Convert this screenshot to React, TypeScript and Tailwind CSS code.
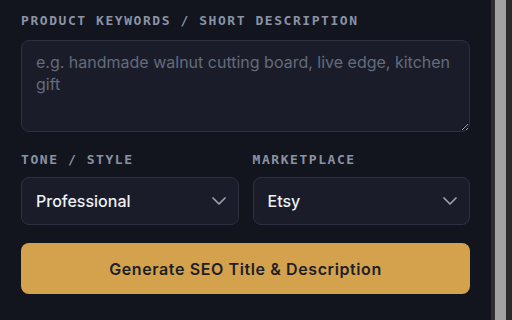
import { ChevronDown } from "lucide-react";

const labelCls =
  "block text-[13px] leading-4 font-semibold tracking-[1.55px] uppercase text-[#8a92a6] [font-family:'DejaVu_Sans_Mono',monospace]";

const Select = ({ value }: { value: string }) => {
  return (
    <div className="flex h-12 items-center justify-between rounded-lg border border-[#2c3142] bg-[#1a1d29] pl-[14px] pr-[7px]">
      <span className="text-base font-medium text-[#eef0f5]">{value}</span>
      <ChevronDown size={24} strokeWidth={1.75} className="text-[#9aa0b0]" />
    </div>
  );
};

export default function App() {
  return (
    <div className="flex h-[320px] w-[512px] overflow-hidden bg-[#12151d] [font-family:Inter,sans-serif]">
      <div className="flex w-[491px] flex-col px-[21px] pt-[13px]">
        <label className={labelCls}>Product Keywords / Short Description</label>
        <textarea
          className="mt-[11px] h-[92px] w-full shrink-0 resize-y rounded-lg border border-[#2c3142] bg-[#1a1d29] px-[14px] py-[10px] text-base leading-[22px] text-[#eef0f5] outline-none placeholder:text-[#656b7b]"
          placeholder="e.g. handmade walnut cutting board, live edge, kitchen gift"
        />
        <div className="mt-[20px] grid grid-cols-2 gap-[14px]">
          <div className="flex flex-col">
            <label className={labelCls}>Tone / Style</label>
            <div className="mt-[9px]">
              <Select value="Professional" />
            </div>
          </div>
          <div className="flex flex-col">
            <label className={labelCls}>Marketplace</label>
            <div className="mt-[9px]">
              <Select value="Etsy" />
            </div>
          </div>
        </div>
        <button className="mt-[18px] h-[51px] w-full shrink-0 rounded-lg bg-[#d4a24c] text-base font-semibold tracking-[0.6px] text-[#1d1f26]">
          Generate SEO Title &amp; Description
        </button>
        <div className="mt-[23px] flex shrink-0 items-center justify-between">
          <span className={labelCls}>Optimized Title</span>
          <span className="pr-[14px] text-[13px] font-medium leading-4 text-[#2bb3a0]">Copy</span>
        </div>
      </div>
      <div className="flex w-[21px] bg-[#2b2b2b]">
        <div className="w-[4px] bg-[#2f2f2f]" />
        <div className="w-[11px] bg-[#a2a2a2]" />
        <div className="w-[6px] bg-[#2a2a2a]" />
      </div>
    </div>
  );
}
